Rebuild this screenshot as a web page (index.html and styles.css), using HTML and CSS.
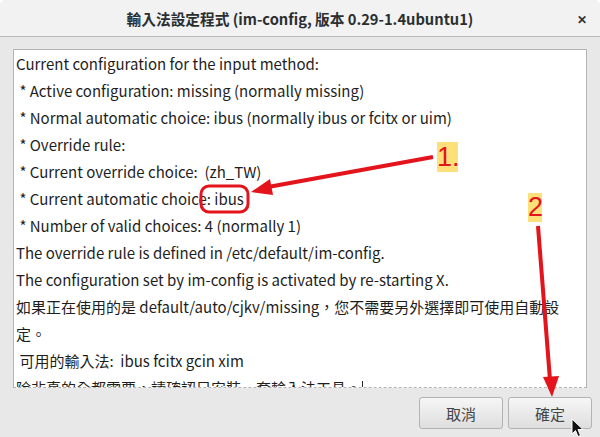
FILE: index.html
```html
<!DOCTYPE html>
<html lang="zh-TW">

<head>
    <meta charset="UTF-8">
    <title>im-config</title>
    <link rel="stylesheet" href="styles.css">
</head>

<body>

    <div class="window">
        <header class="titlebar">
            <span class="titlebar__title">輸入法設定程式 (im-config, 版本 0.29-1.4ubuntu1)</span>
            <span class="titlebar__close">&#x2715;</span>
        </header>

        <main class="dialog">
            <div class="textview">
                <p>Current configuration for the input method:</p>
                <p> * Active configuration: missing (normally missing)</p>
                <p> * Normal automatic choice: ibus (normally ibus or fcitx or uim)</p>
                <p> * Override rule: </p>
                <p> * Current override choice:  (zh_TW)</p>
                <p> * Current automatic choice: ibus</p>
                <p> * Number of valid choices: 4 (normally 1)</p>
                <p>The override rule is defined in /etc/default/im-config.</p>
                <p>The configuration set by im-config is activated by re-starting X.</p>
                <p>如果正在使用的是 default/auto/cjkv/missing，您不需要另外選擇即可使用自動設定。</p>
                <p> 可用的輸入法:  ibus fcitx gcin xim</p>
                <p>除非真的全都需要，請確認只安裝一套輸入法工具。<span class="caret"></span></p>
            </div>

            <div class="actions">
                <button class="btn">取消</button>
                <button class="btn">確定</button>
            </div>
        </main>

        <!-- annotations drawn over the screenshot -->
        <svg class="marks" width="600" height="437" viewBox="0 0 600 437">
            <rect x="201" y="186" width="47" height="26" rx="8" fill="none" stroke="#e3141b" stroke-width="3" />
            <line x1="433" y1="157" x2="268" y2="187" stroke="#e3141b" stroke-width="4" />
            <polygon points="251,192 270,179 273,195" fill="#e3141b" />
            <line x1="538" y1="226" x2="550" y2="380" stroke="#e3141b" stroke-width="4" />
            <polygon points="543,377 559,376 552,397" fill="#e3141b" />
        </svg>
        <span class="tag tag--one">1.</span>
        <span class="tag tag--two">2</span>

        <svg class="pointer" width="14" height="20" viewBox="0 0 14 20">
            <path d="M1 1 L1 16 L4.5 12.5 L7 18.5 L9.5 17.5 L7 11.5 L12 11.5 Z" fill="#111" stroke="#fff" stroke-width="1" />
        </svg>
    </div>

</body>

</html>
```

FILE: styles.css
```css
* {
    padding: 0;
    margin: 0;
    box-sizing: border-box;
}

body {
    background-color: #ffffff;
    font-family: "Noto Sans CJK TC", "Noto Sans", sans-serif;
}

.window {
    position: relative;
    width: 600px;
    height: 437px;
    background-color: #e8e8e8;
    border-radius: 6px 6px 0 0;
    overflow: hidden;
}

.titlebar {
    height: 37px;
    background-color: #f2f2f2;
    border-bottom: 1px solid #b9b9b9;
    display: flex;
    justify-content: center;
    align-items: center;
    position: relative;
}

.titlebar__title {
    font-size: 14.7px;
    font-weight: bold;
    color: #2a2e30;
}

.titlebar__close {
    position: absolute;
    right: 13px;
    top: 10px;
    font-size: 12px;
    font-weight: bold;
    color: #2e3436;
}

.dialog {
    padding: 12px 13px 0 13px;
}

.textview {
    height: 339px;
    background-color: #ffffff;
    border: 1px solid #b4b4b4;
    border-bottom: 1px dashed #b4b4b4;
    padding: 0 20px 0 2px;
    overflow: hidden;
    font-size: 15px;
    line-height: 27px;
    color: #1e1e1e;
}

.textview p {
    white-space: pre-wrap;
}

.caret {
    display: inline-block;
    width: 1px;
    height: 15px;
    background-color: #222;
    vertical-align: -2px;
    margin-left: 1px;
}

.actions {
    display: flex;
    justify-content: flex-end;
    gap: 5px;
    margin-top: 9px;
    margin-right: -5px;
}

.btn {
    width: 84px;
    height: 32px;
    border: 1px solid #b3b3b3;
    border-radius: 3px;
    background: linear-gradient(#f6f6f6, #dedede);
    font-family: "Noto Sans CJK TC", sans-serif;
    font-size: 15px;
    color: #444;
}

.marks {
    position: absolute;
    left: 0;
    top: 0;
}

.tag {
    position: absolute;
    background-color: #fde07a;
    color: #e3141b;
    font-family: "Liberation Sans", sans-serif;
    font-size: 27px;
    line-height: 30px;
}

.tag--one {
    left: 437px;
    top: 142px;
    width: 21px;
    height: 30px;
}

.tag--two {
    left: 528px;
    top: 193px;
    width: 14px;
    height: 29px;
    text-align: center;
    line-height: 29px;
}

.pointer {
    position: absolute;
    left: 571px;
    top: 418px;
}
```
